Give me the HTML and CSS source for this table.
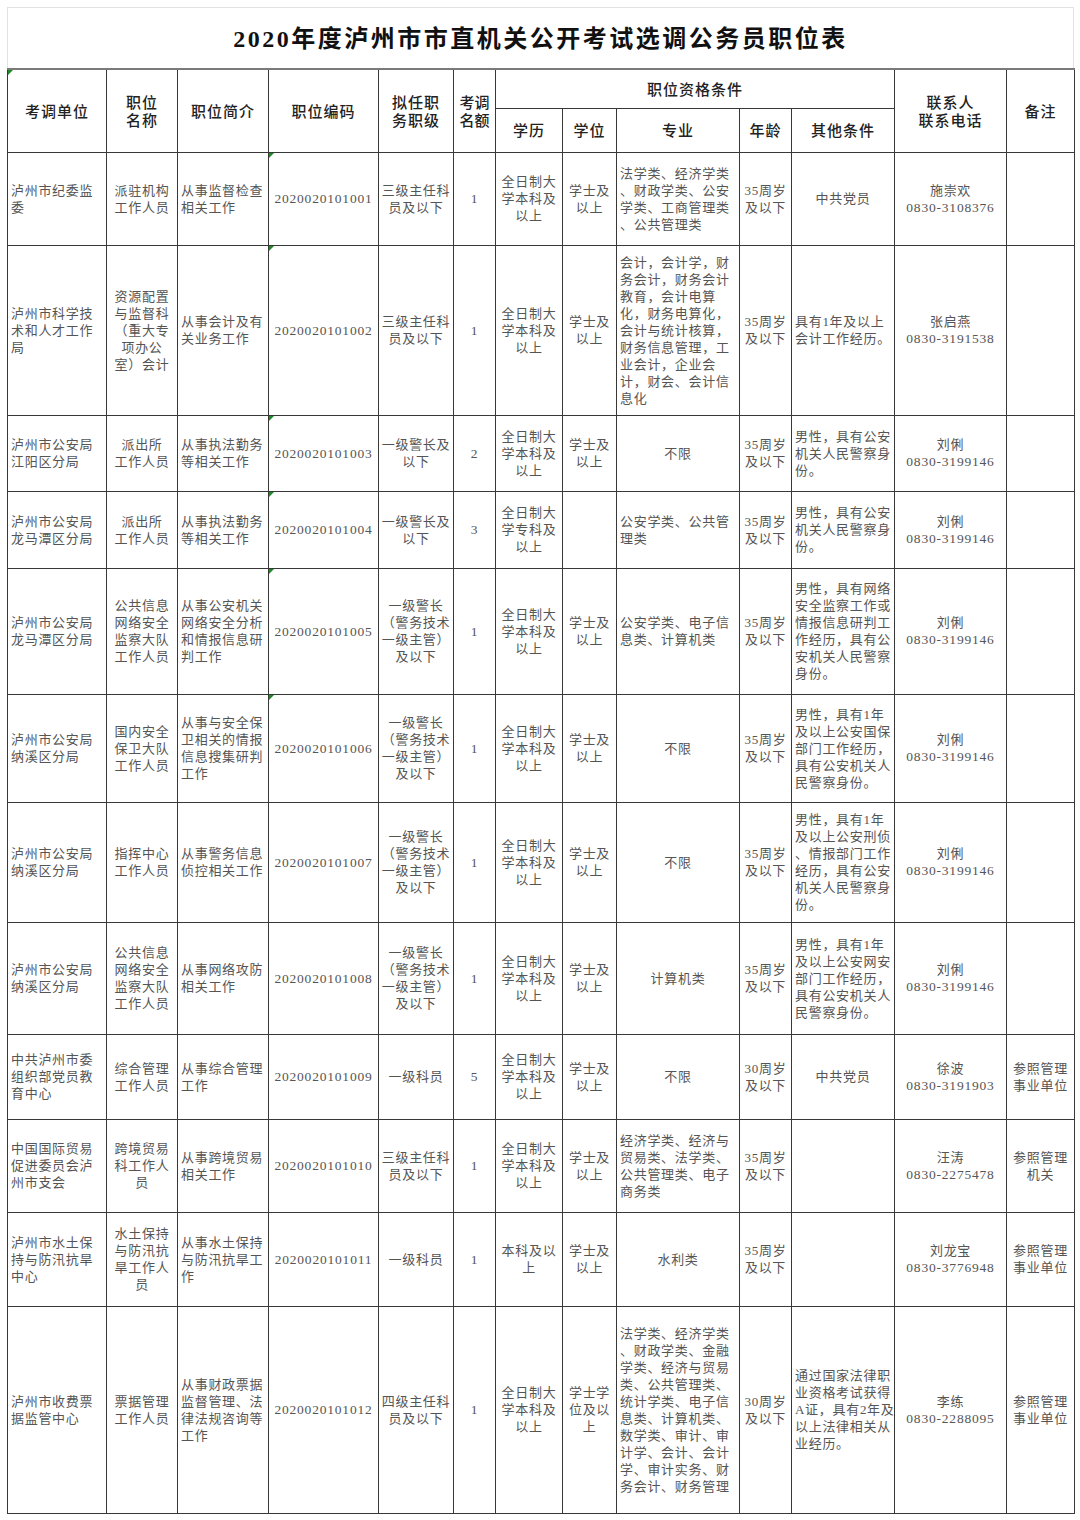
FILE: index.html
```html
<!DOCTYPE html>
<html lang="zh-CN">
<head>
<meta charset="utf-8">
<title>2020年度泸州市市直机关公开考试选调公务员职位表</title>
<link rel="stylesheet" href="styles.css">
</head>
<body>
<div class="page">
  <div class="title">2020年度泸州市市直机关公开考试选调公务员职位表</div>
  <table class="grid">
    <colgroup>
      <col class="c1"><col class="c2"><col class="c3"><col class="c4"><col class="c5"><col class="c6"><col class="c7"><col class="c8"><col class="c9"><col class="c10"><col class="c11"><col class="c12"><col class="c13">
    </colgroup>
    <thead>
      <tr class="hr1">
        <th rowspan="2" class="mark">考调单位</th>
        <th rowspan="2">职位<br>名称</th>
        <th rowspan="2">职位简介</th>
        <th rowspan="2">职位编码</th>
        <th rowspan="2">拟任职<br>务职级</th>
        <th rowspan="2" class="tight">考调<br>名额</th>
        <th colspan="5">职位资格条件</th>
        <th rowspan="2">联系人<br>联系电话</th>
        <th rowspan="2">备注</th>
      </tr>
      <tr class="hr2">
        <th>学历</th>
        <th>学位</th>
        <th>专业</th>
        <th>年龄</th>
        <th>其他条件</th>
      </tr>
    </thead>
    <tbody>
      <tr class="r1">
        <td class="l">泸州市纪委监<br>委</td>
        <td>派驻机构<br>工作人员</td>
        <td class="l">从事监督检查<br>相关工作</td>
        <td class="mark num">2020020101001</td>
        <td>三级主任科<br>员及以下</td>
        <td class="num">1</td>
        <td>全日制大<br>学本科及<br>以上</td>
        <td>学士及<br>以上</td>
        <td class="l">法学类、经济学类<br>、财政学类、公安<br>学类、工商管理类<br>、公共管理类</td>
        <td>35周岁<br>及以下</td>
        <td>中共党员</td>
        <td>施崇欢<br><span class="num">0830-3108376</span></td>
        <td></td>
      </tr>
      <tr class="r2">
        <td class="l">泸州市科学技<br>术和人才工作<br>局</td>
        <td>资源配置<br>与监督科<br>（重大专<br>项办公<br>室）会计</td>
        <td class="l">从事会计及有<br>关业务工作</td>
        <td class="mark num">2020020101002</td>
        <td>三级主任科<br>员及以下</td>
        <td class="num">1</td>
        <td>全日制大<br>学本科及<br>以上</td>
        <td>学士及<br>以上</td>
        <td class="l">会计，会计学，财<br>务会计，财务会计<br>教育，会计电算<br>化，财务电算化，<br>会计与统计核算，<br>财务信息管理，工<br>业会计，企业会<br>计，财会、会计信<br>息化</td>
        <td>35周岁<br>及以下</td>
        <td class="l">具有1年及以上<br>会计工作经历。</td>
        <td>张启燕<br><span class="num">0830-3191538</span></td>
        <td></td>
      </tr>
      <tr class="r3">
        <td class="l">泸州市公安局<br>江阳区分局</td>
        <td>派出所<br>工作人员</td>
        <td class="l">从事执法勤务<br>等相关工作</td>
        <td class="mark num">2020020101003</td>
        <td>一级警长及<br>以下</td>
        <td class="num">2</td>
        <td>全日制大<br>学本科及<br>以上</td>
        <td>学士及<br>以上</td>
        <td>不限</td>
        <td>35周岁<br>及以下</td>
        <td class="l">男性，具有公安<br>机关人民警察身<br>份。</td>
        <td>刘俐<br><span class="num">0830-3199146</span></td>
        <td></td>
      </tr>
      <tr class="r4">
        <td class="l">泸州市公安局<br>龙马潭区分局</td>
        <td>派出所<br>工作人员</td>
        <td class="l">从事执法勤务<br>等相关工作</td>
        <td class="mark num">2020020101004</td>
        <td>一级警长及<br>以下</td>
        <td class="num">3</td>
        <td>全日制大<br>学专科及<br>以上</td>
        <td></td>
        <td class="l">公安学类、公共管<br>理类</td>
        <td>35周岁<br>及以下</td>
        <td class="l">男性，具有公安<br>机关人民警察身<br>份。</td>
        <td>刘俐<br><span class="num">0830-3199146</span></td>
        <td></td>
      </tr>
      <tr class="r5">
        <td class="l">泸州市公安局<br>龙马潭区分局</td>
        <td>公共信息<br>网络安全<br>监察大队<br>工作人员</td>
        <td class="l">从事公安机关<br>网络安全分析<br>和情报信息研<br>判工作</td>
        <td class="mark num">2020020101005</td>
        <td>一级警长<br>（警务技术<br>一级主管）<br>及以下</td>
        <td class="num">1</td>
        <td>全日制大<br>学本科及<br>以上</td>
        <td>学士及<br>以上</td>
        <td class="l">公安学类、电子信<br>息类、计算机类</td>
        <td>35周岁<br>及以下</td>
        <td class="l">男性，具有网络<br>安全监察工作或<br>情报信息研判工<br>作经历，具有公<br>安机关人民警察<br>身份。</td>
        <td>刘俐<br><span class="num">0830-3199146</span></td>
        <td></td>
      </tr>
      <tr class="r6">
        <td class="l">泸州市公安局<br>纳溪区分局</td>
        <td>国内安全<br>保卫大队<br>工作人员</td>
        <td class="l">从事与安全保<br>卫相关的情报<br>信息搜集研判<br>工作</td>
        <td class="mark num">2020020101006</td>
        <td>一级警长<br>（警务技术<br>一级主管）<br>及以下</td>
        <td class="num">1</td>
        <td>全日制大<br>学本科及<br>以上</td>
        <td>学士及<br>以上</td>
        <td>不限</td>
        <td>35周岁<br>及以下</td>
        <td class="l">男性，具有1年<br>及以上公安国保<br>部门工作经历，<br>具有公安机关人<br>民警察身份。</td>
        <td>刘俐<br><span class="num">0830-3199146</span></td>
        <td></td>
      </tr>
      <tr class="r7">
        <td class="l">泸州市公安局<br>纳溪区分局</td>
        <td>指挥中心<br>工作人员</td>
        <td class="l">从事警务信息<br>侦控相关工作</td>
        <td class="num">2020020101007</td>
        <td>一级警长<br>（警务技术<br>一级主管）<br>及以下</td>
        <td class="num">1</td>
        <td>全日制大<br>学本科及<br>以上</td>
        <td>学士及<br>以上</td>
        <td>不限</td>
        <td>35周岁<br>及以下</td>
        <td class="l">男性，具有1年<br>及以上公安刑侦<br>、情报部门工作<br>经历，具有公安<br>机关人民警察身<br>份。</td>
        <td>刘俐<br><span class="num">0830-3199146</span></td>
        <td></td>
      </tr>
      <tr class="r8">
        <td class="l">泸州市公安局<br>纳溪区分局</td>
        <td>公共信息<br>网络安全<br>监察大队<br>工作人员</td>
        <td class="l">从事网络攻防<br>相关工作</td>
        <td class="num">2020020101008</td>
        <td>一级警长<br>（警务技术<br>一级主管）<br>及以下</td>
        <td class="num">1</td>
        <td>全日制大<br>学本科及<br>以上</td>
        <td>学士及<br>以上</td>
        <td>计算机类</td>
        <td>35周岁<br>及以下</td>
        <td class="l">男性，具有1年<br>及以上公安网安<br>部门工作经历，<br>具有公安机关人<br>民警察身份。</td>
        <td>刘俐<br><span class="num">0830-3199146</span></td>
        <td></td>
      </tr>
      <tr class="r9">
        <td class="l">中共泸州市委<br>组织部党员教<br>育中心</td>
        <td>综合管理<br>工作人员</td>
        <td class="l">从事综合管理<br>工作</td>
        <td class="num">2020020101009</td>
        <td>一级科员</td>
        <td class="num">5</td>
        <td>全日制大<br>学本科及<br>以上</td>
        <td>学士及<br>以上</td>
        <td>不限</td>
        <td>30周岁<br>及以下</td>
        <td>中共党员</td>
        <td>徐波<br><span class="num">0830-3191903</span></td>
        <td>参照管理<br>事业单位</td>
      </tr>
      <tr class="r10">
        <td class="l">中国国际贸易<br>促进委员会泸<br>州市支会</td>
        <td>跨境贸易<br>科工作人<br>员</td>
        <td class="l">从事跨境贸易<br>相关工作</td>
        <td class="num">2020020101010</td>
        <td>三级主任科<br>员及以下</td>
        <td class="num">1</td>
        <td>全日制大<br>学本科及<br>以上</td>
        <td>学士及<br>以上</td>
        <td class="l">经济学类、经济与<br>贸易类、法学类、<br>公共管理类、电子<br>商务类</td>
        <td>35周岁<br>及以下</td>
        <td></td>
        <td>汪涛<br><span class="num">0830-2275478</span></td>
        <td>参照管理<br>机关</td>
      </tr>
      <tr class="r11">
        <td class="l">泸州市水土保<br>持与防汛抗旱<br>中心</td>
        <td>水土保持<br>与防汛抗<br>旱工作人<br>员</td>
        <td class="l">从事水土保持<br>与防汛抗旱工<br>作</td>
        <td class="num">2020020101011</td>
        <td>一级科员</td>
        <td class="num">1</td>
        <td>本科及以<br>上</td>
        <td>学士及<br>以上</td>
        <td>水利类</td>
        <td>35周岁<br>及以下</td>
        <td></td>
        <td>刘龙宝<br><span class="num">0830-3776948</span></td>
        <td>参照管理<br>事业单位</td>
      </tr>
      <tr class="r12">
        <td class="l">泸州市收费票<br>据监管中心</td>
        <td>票据管理<br>工作人员</td>
        <td class="l">从事财政票据<br>监督管理、法<br>律法规咨询等<br>工作</td>
        <td class="num">2020020101012</td>
        <td>四级主任科<br>员及以下</td>
        <td class="num">1</td>
        <td>全日制大<br>学本科及<br>以上</td>
        <td>学士学<br>位及以<br>上</td>
        <td class="l">法学类、经济学类<br>、财政学类、金融<br>学类、经济与贸易<br>类、公共管理类、<br>统计学类、电子信<br>息类、计算机类、<br>数学类、审计、审<br>计学、会计、会计<br>学、审计实务、财<br>务会计、财务管理</td>
        <td>30周岁<br>及以下</td>
        <td class="l">通过国家法律职<br>业资格考试获得<br>A证，具有2年及<br>以上法律相关从<br>业经历。</td>
        <td>李练<br><span class="num">0830-2288095</span></td>
        <td>参照管理<br>事业单位</td>
      </tr>
    </tbody>
  </table>
</div>
</body>
</html>
```

FILE: styles.css
```css
html, body {
  margin: 0;
  padding: 0;
  background: #ffffff;
}

.page {
  padding: 7px 0 0 7px;
  width: 1067px;
}

.title {
  box-sizing: border-box;
  width: 1067px;
  height: 61px;
  border: 1px solid #e2e2e2;
  border-bottom: none;
  display: flex;
  align-items: center;
  justify-content: center;
  font-family: "Liberation Serif", "Noto Sans CJK SC", serif;
  font-weight: 700;
  font-size: 24px;
  letter-spacing: 2.5px;
  color: #111111;
  padding-bottom: 3px;
}

.grid {
  width: 1067px;
  table-layout: fixed;
  border-collapse: collapse;
}

.c1 { width: 99px; }
.c2 { width: 71px; }
.c3 { width: 91px; }
.c4 { width: 110px; }
.c5 { width: 75px; }
.c6 { width: 42px; }
.c7 { width: 67px; }
.c8 { width: 54px; }
.c9 { width: 123px; }
.c10 { width: 52px; }
.c11 { width: 103px; }
.c12 { width: 112px; }
.c13 { width: 68px; }

.grid th,
.grid td {
  border: 1px solid #383838;
  padding: 0 2px;
  white-space: nowrap;
  vertical-align: middle;
  text-align: center;
  position: relative;
  overflow: hidden;
}

.grid thead tr.hr1 th {
  border-top: 2px solid #7a7a7a;
}

.grid th {
  font-family: "Noto Sans CJK SC", sans-serif;
  font-weight: 500;
  font-size: 15px;
  line-height: 18px;
  letter-spacing: 1px;
  color: #222222;
}

.grid th.tight {
  letter-spacing: 0;
  padding: 0;
}

.grid td {
  font-family: "Liberation Serif", "Noto Sans CJK SC", serif;
  font-size: 13px;
  line-height: 17px;
  letter-spacing: 0.7px;
  color: #555555;
}

.grid .num {
  font-size: 13.5px;
  letter-spacing: 0.8px;
}

.grid td.l {
  text-align: left;
  padding-left: 3px;
}

.mark::before {
  content: "";
  position: absolute;
  top: 0;
  left: 0;
  width: 0;
  height: 0;
  border-top: 5px solid #1f8a24;
  border-right: 5px solid transparent;
}

.hr1 { height: 39px; }
.hr2 { height: 44px; }
.r1 { height: 93px; }
.r2 { height: 170px; }
.r3 { height: 76px; }
.r4 { height: 77px; }
.r5 { height: 126px; }
.r6 { height: 108px; }
.r7 { height: 120px; }
.r8 { height: 112px; }
.r9 { height: 85px; }
.r10 { height: 93px; }
.r11 { height: 94px; }
.r12 { height: 207px; }
```
